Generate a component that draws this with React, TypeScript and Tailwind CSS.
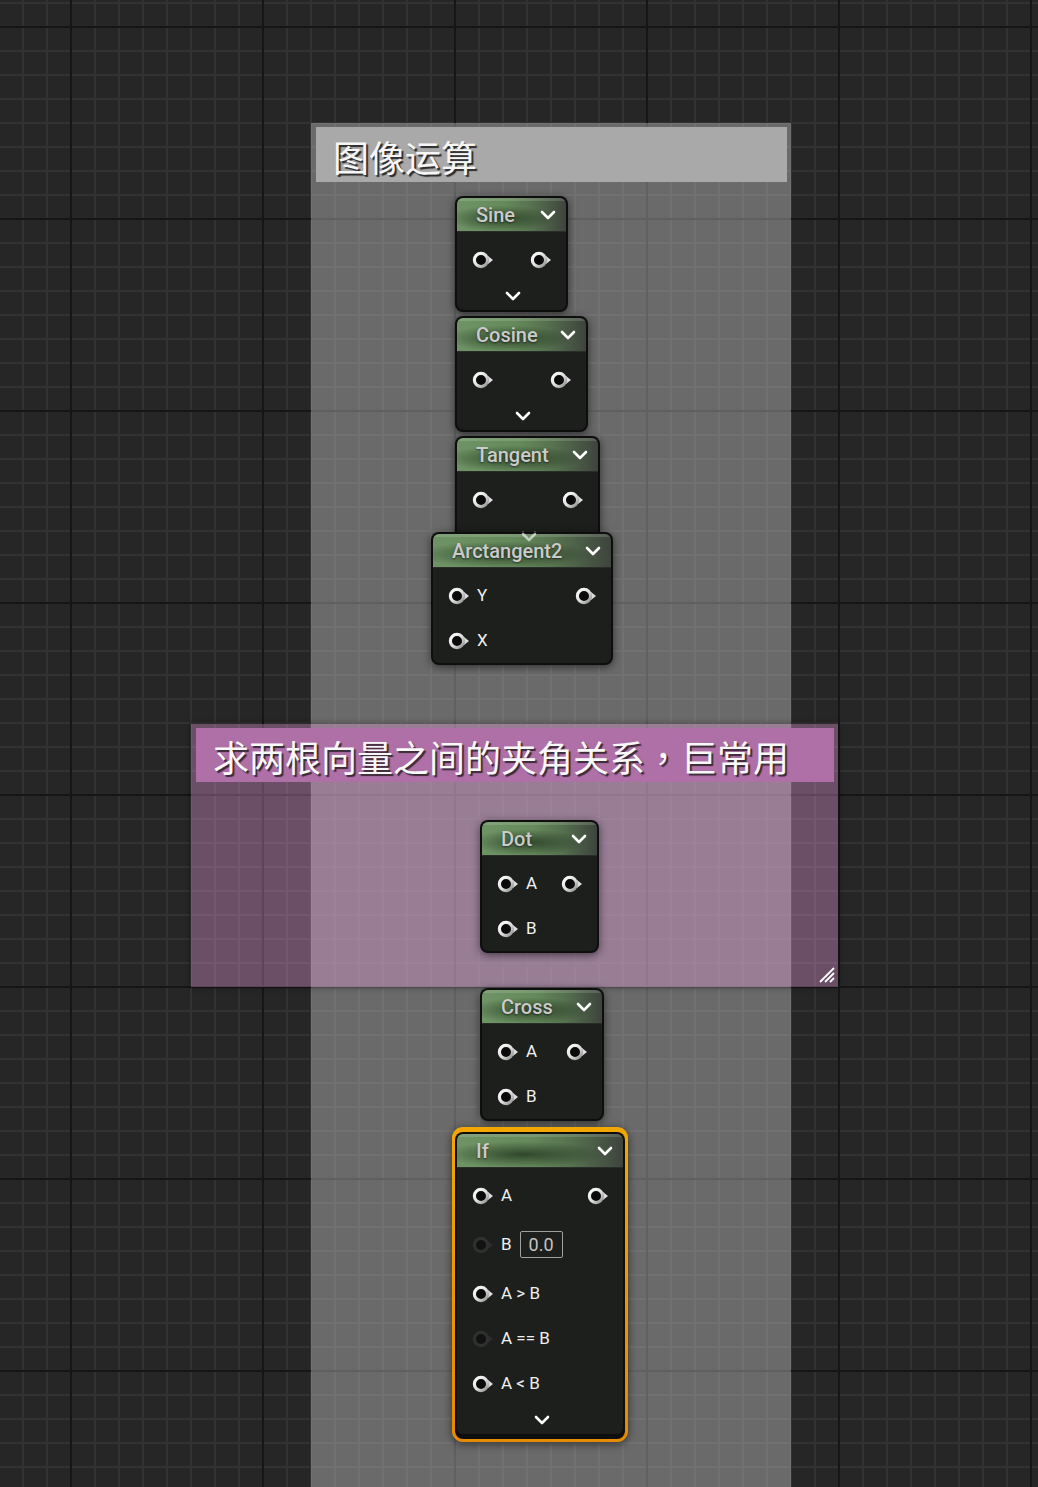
import React from "react";

type Row = {
    label?: string;
    dim?: boolean;
    out?: boolean;
    value?: string;
    tall?: boolean;
};

const PinIcon = ({ dim }: { dim?: boolean }) => (
    <svg width="23" height="18" viewBox="0 0 23 18" className="shrink-0">
        <defs>
            <linearGradient id="ring" x1="0" y1="0" x2="1" y2="1">
                <stop offset="0" stopColor="#ffffff" />
                <stop offset="0.55" stopColor="#dcdcdc" />
                <stop offset="1" stopColor="#8a8a8a" />
            </linearGradient>
        </defs>
        <polygon points="16,5 21,9 16,13" fill={dim ? "#2c2d2c" : "#dedede"} />
        <circle cx="9" cy="9" r="6.6" fill={dim ? "#111211" : "#0a0a0a"} stroke={dim ? "#2f302f" : "url(#ring)"} strokeWidth="3.2" />
    </svg>
);

const Chevron = ({ className = "" }: { className?: string }) => (
    <svg width="16" height="10" viewBox="0 0 16 10" className={className}>
        <polyline points="2,2 8,8 14,2" fill="none" stroke="#ffffff" strokeWidth="2.6" strokeLinecap="round" strokeLinejoin="round" />
    </svg>
);

const GraphNode = ({ pos, title, rows, more }: { pos: string; title: string; rows: Row[]; more?: boolean }) => {
    return (
        <div className={`absolute ${pos} rounded-[8px] bg-[#0d0e0d] p-[2px] shadow-[0_2px_8px_rgba(0,0,0,0.55)]`}>
            <NodeInner title={title} rows={rows} more={more} />
        </div>
    );
};

const NodeInner = ({ title, rows, more }: { title: string; rows: Row[]; more?: boolean }) => (
    <>
        <div className="relative h-[34px] rounded-t-[6px] overflow-hidden bg-[linear-gradient(to_right,#6e9364_0%,#65895b_45%,#55704e_70%,#3e443d_100%)]">
            <div className="absolute inset-0 bg-[radial-gradient(ellipse_50%_38%_at_40%_60%,rgba(24,42,22,0.7),transparent)]" />
            <div className="absolute inset-x-0 top-0 h-[3px] bg-[rgba(255,255,255,0.14)]" />
            <div className="absolute inset-x-0 bottom-0 h-[1px] bg-[#2a2c29]" />
            <div className="relative h-full flex items-center justify-between pl-[19px] pr-[10px]">
                <span className="text-[20px] font-medium text-[#cbcbcb] leading-none [text-shadow:0_1px_2px_rgba(0,0,0,0.5)]">{title}</span>
                <Chevron />
            </div>
        </div>
        <div className="rounded-b-[6px] bg-[#1d1f1c] pt-[5px]">
            {rows.map((r, i) => (
                <div key={i} className={`${r.tall ? "h-[53px]" : "h-[45px]"} flex items-center justify-between pl-[15px] pr-[13px]`}>
                    <div className="flex items-center">
                        <PinIcon dim={r.dim} />
                        {r.label && <span className="ml-[6px] text-[17px] text-[#f0f0f0] leading-none">{r.label}</span>}
                        {r.value && (
                            <span className="ml-[8px] h-[27px] w-[43px] flex items-center justify-center border border-[#a0a0a0] rounded-[2px] text-[18px] text-[#c4c4c4] leading-none">
                                {r.value}
                            </span>
                        )}
                    </div>
                    {r.out && <PinIcon />}
                </div>
            ))}
            {more && (
                <div className="h-[28px] flex items-center justify-center pl-[3px]">
                    <Chevron />
                </div>
            )}
        </div>
    </>
);

export default function App() {
    return (
        <div className="relative w-[1038px] h-[1487px] overflow-hidden bg-[#262626] font-['Roboto','Noto_Sans_CJK_SC',sans-serif] bg-[image:linear-gradient(to_right,#161616_2px,transparent_2px),linear-gradient(to_bottom,#161616_2px,transparent_2px),linear-gradient(to_right,#323232_2px,transparent_2px),linear-gradient(to_bottom,#323232_2px,transparent_2px)] bg-[length:192px_192px,192px_192px,24px_24px,24px_24px] bg-[position:70px_0,0_26px,22px_0,0_2px]">
            {/* gray comment */}
            <div className="absolute left-[311px] top-[123px] w-[480px] h-[1380px] bg-[rgba(200,200,200,0.42)]">
                <div className="ml-[5px] mr-[4px] mt-[4px] h-[55px] bg-[#a9a9a9] flex items-center pl-[17px]">
                    <span className="text-[36px] text-[#f6f6f6] leading-none mt-[2px] font-['Noto_Sans_CJK_SC',sans-serif] [text-shadow:2px_2px_1px_#2a2a2a]">图像运算</span>
                </div>
            </div>

            {/* purple comment */}
            <div className="absolute left-[191px] top-[724px] w-[647px] h-[263px] bg-[rgba(247,165,238,0.33)] shadow-[0_0_6px_rgba(0,0,0,0.45)]">
                <div className="ml-[5px] mr-[4px] mt-[4px] h-[54px] bg-[#af70a7] flex items-center pl-[17px]">
                    <span className="text-[36px] text-[#f8f8f8] leading-none mt-[2px] font-['Noto_Sans_CJK_SC',sans-serif] [text-shadow:2px_2px_1px_#3a2a38]">
                        求两根向量之间的夹角关系<span className="font-['Noto_Sans_CJK_TC',sans-serif]">，</span>巨常用
                    </span>
                </div>
                <svg width="18" height="18" viewBox="0 0 18 18" className="absolute right-[3px] bottom-[4px]">
                    <line x1="17" y1="3" x2="3" y2="17" stroke="#ffffff" strokeWidth="1.8" />
                    <line x1="17" y1="8" x2="8" y2="17" stroke="#ffffff" strokeWidth="1.8" />
                    <line x1="17" y1="13" x2="13" y2="17" stroke="#ffffff" strokeWidth="1.8" />
                </svg>
            </div>

            <GraphNode pos="left-[455px] top-[196px] w-[113px]" title="Sine" rows={[{ out: true }]} more />
            <GraphNode pos="left-[455px] top-[316px] w-[133px]" title="Cosine" rows={[{ out: true }]} more />
            <GraphNode pos="left-[455px] top-[436px] w-[145px]" title="Tangent" rows={[{ out: true }]} more />
            <GraphNode pos="left-[431px] top-[532px] w-[182px]" title="Arctangent2" rows={[{ label: "Y", out: true }, { label: "X" }]} />
            <div className="absolute left-[521px] top-[532px] opacity-60">
                <Chevron />
            </div>

            <GraphNode pos="left-[480px] top-[820px] w-[119px]" title="Dot" rows={[{ label: "A", out: true }, { label: "B" }]} />
            <GraphNode pos="left-[480px] top-[988px] w-[124px]" title="Cross" rows={[{ label: "A", out: true }, { label: "B" }]} />

            {/* selected If node */}
            <div className="absolute left-[452px] top-[1127px] w-[176px] rounded-[11px] p-[3px] pt-[5px] bg-[linear-gradient(to_bottom,#f2a800,#e68a00)] shadow-[0_2px_8px_rgba(0,0,0,0.55)]">
                <div className="rounded-[8px] bg-[#0d0e0d] p-[2px] pb-[5px]">
                    <NodeInner
                        title="If"
                        rows={[
                            { label: "A", out: true },
                            { label: "B", dim: true, value: "0.0", tall: true },
                            { label: "A > B" },
                            { label: "A == B", dim: true },
                            { label: "A < B" },
                        ]}
                        more
                    />
                </div>
            </div>
        </div>
    );
}
